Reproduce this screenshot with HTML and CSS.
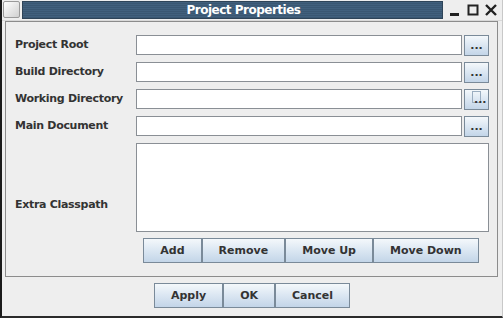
FILE: index.html
```html
<!DOCTYPE html>
<html lang="en">
  <head>
    <meta charset="UTF-8" />
    <title>Project Properties</title>
    <link rel="stylesheet" href="styles.css">
  </head>

  <body>
    <div class="window">
      <div class="titlebar">
        <div class="app-icon"></div>
        <div class="title">Project Properties</div>
        <div class="controls">
          <svg width="12" height="12" viewBox="0 0 12 12"><rect x="1" y="9" width="9" height="3" fill="#222"/></svg>
          <svg width="12" height="12" viewBox="0 0 12 12"><rect x="1.5" y="1.5" width="9" height="9" fill="none" stroke="#222" stroke-width="2"/></svg>
          <svg width="12" height="12" viewBox="0 0 12 12"><path d="M1 1 L11 11 M11 1 L1 11" stroke="#222" stroke-width="2.4"/></svg>
        </div>
      </div>

      <div class="panel">
        <label class="label">Project Root</label>
        <input class="field" type="text" />
        <button class="browse">...</button>

        <label class="label">Build Directory</label>
        <input class="field" type="text" />
        <button class="browse">...</button>

        <label class="label">Working Directory</label>
        <input class="field" type="text" />
        <button class="browse"><span class="focus-ring">...</span></button>

        <label class="label">Main Document</label>
        <input class="field" type="text" />
        <button class="browse">...</button>

        <label class="label classpath-label">Extra Classpath</label>
        <textarea class="classpath"></textarea>
        <div class="list-buttons">
          <button>Add</button>
          <button>Remove</button>
          <button>Move Up</button>
          <button>Move Down</button>
        </div>
      </div>

      <div class="footer">
        <button>Apply</button>
        <button>OK</button>
        <button>Cancel</button>
      </div>
    </div>
  </body>
</html>
```

FILE: styles.css
```css
html,
body {
  margin: 0;
  padding: 0;
  background-color: #eeeeee;
}

.window {
  width: 503px;
  height: 318px;
  box-sizing: border-box;
  border-left: 2px solid #1a1a1a;
  border-bottom: 2px solid #2a2a2a;
  border-right: 1px solid #c8c8c8;
  background-color: #eeeeee;
  display: flex;
  flex-direction: column;
  font-family: "DejaVu Sans", sans-serif;
}

.titlebar {
  height: 21px;
  display: flex;
  align-items: center;
  padding: 0 0 1px 1px;
  border-bottom: 1px solid #d8d8d8;
  box-sizing: border-box;
}

.app-icon {
  width: 15px;
  height: 15px;
  border: 1px solid #9a9a9a;
  border-radius: 2px;
  background: linear-gradient(135deg, #ffffff, #d0d0d0);
}

.title {
  flex: 1;
  height: 16px;
  margin-left: 2px;
  padding-left: 22px;
  background: repeating-linear-gradient(180deg, #41607d 0, #41607d 1px, #3a5772 1px, #3a5772 2px);
  border: 1px solid #2e4458;
  color: white;
  font-weight: bold;
  font-size: 12px;
  letter-spacing: -0.5px;
  line-height: 16px;
  text-align: center;
}

.controls {
  display: flex;
  gap: 6px;
  padding: 0 5px 0 6px;
}

.panel {
  height: 256px;
  margin: 0 4px 0 3px;
  border: 1px solid #8c8c8c;
  box-sizing: border-box;
  padding: 13px 9px 0 9px;
  display: grid;
  grid-template-columns: 119px 326px 25px;
  grid-template-rows: 20px 20px 20px 20px 88px 25px;
  column-gap: 2px;
  row-gap: 7px;
  align-items: start;
}

.label {
  font-size: 11px;
  font-weight: bold;
  letter-spacing: -0.3px;
  color: #333333;
  line-height: 20px;
}

.field {
  height: 20px;
  box-sizing: border-box;
  border: 1px solid #8a8f95;
  background-color: white;
  margin: 0;
  padding: 0 2px;
}

button {
  font-family: "DejaVu Sans", sans-serif;
  font-size: 11px;
  font-weight: bold;
  color: #333333;
  border: 1px solid #7a8a99;
  border-radius: 0;
  background: linear-gradient(180deg, #f4f8fb 0%, #dde8f3 45%, #c3d5e8 100%);
  box-sizing: border-box;
  margin: 0;
  cursor: pointer;
}

.browse {
  width: 25px;
  height: 21px;
  padding: 0;
  line-height: 14px;
}

.focus-ring {
  display: inline-block;
  border: 1px solid #9aadc0;
  padding: 1px 0 0 1px;
  width: 9px;
  height: 12px;
  box-sizing: border-box;
  line-height: 14px;
  margin-top: -1px;
}

.classpath-label {
  grid-row: 5 / span 2;
  align-self: center;
  margin-top: 4px;
}

.classpath {
  grid-column: 2 / span 2;
  height: 89px;
  box-sizing: border-box;
  border: 1px solid #8a8f95;
  background-color: white;
  resize: none;
  margin: 0;
}

.list-buttons {
  grid-column: 2 / span 2;
  display: flex;
  justify-content: center;
  padding-right: 3px;
}

.list-buttons button,
.footer button {
  height: 25px;
  padding: 0 16px;
}

.footer {
  display: flex;
  justify-content: center;
  padding-top: 6px;
}
```
